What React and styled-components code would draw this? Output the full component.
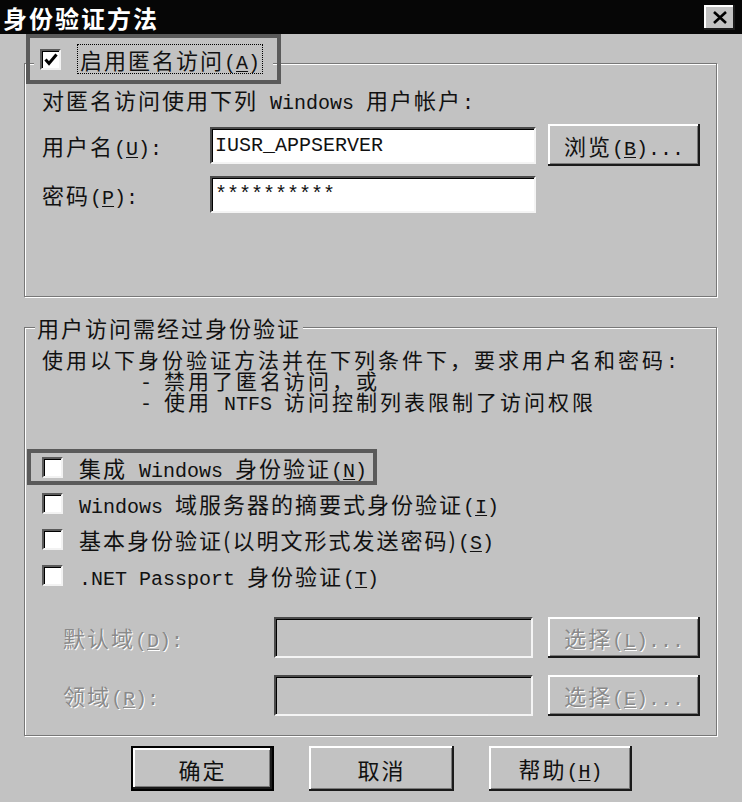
import React from "react"
import styled, { createGlobalStyle } from "styled-components"

const CJK = `"Noto Sans CJK SC", "Liberation Sans", sans-serif`
const MONO = `"Liberation Mono", "DejaVu Sans Mono", monospace`
const FACE = "#c2c2c2"

const GlobalStyle = createGlobalStyle`
  html, body {
    margin: 0;
    padding: 0;
    background: ${FACE};
  }
  * { box-sizing: border-box; }
`

const Dialog = styled.div`
  width: 742px;
  height: 802px;
  background: ${FACE};
  display: flex;
  flex-direction: column;
  font-family: ${CJK};
  font-size: 22px;
  letter-spacing: 2px;
  color: #111;
  overflow: hidden;
`

const TitleBar = styled.div`
  height: 34px;
  flex-shrink: 0;
  background: #060606;
  display: flex;
  align-items: center;
  justify-content: space-between;
  padding: 0 7px 0 3px;
`

const Title = styled.div`
  color: #fff;
  font-weight: 700;
  font-size: 24px;
  letter-spacing: 2px;
`

const CloseButton = styled.button`
  width: 31px;
  height: 25px;
  padding: 0;
  border: 0;
  background: ${FACE};
  display: flex;
  align-items: center;
  justify-content: center;
  box-shadow: inset -2px -2px 0 #1a1a1a, inset 2px 2px 0 #fff;
`

const Body = styled.div`
  padding: 0 25px 0 24px;
  display: flex;
  flex-direction: column;
`

const Group = styled.fieldset`
  margin: ${({ $top }) => $top}px 0 0;
  padding: 0;
  min-width: 0;
  border: 1px solid #777;
  box-shadow: 1px 1px 0 #fff, inset 1px 1px 0 #fff;
`

const Legend = styled.legend`
  margin-left: ${({ $indent }) => $indent}px;
  padding: ${({ $pad }) => $pad};
  background: ${FACE};
  line-height: 28px;
  height: ${({ $h }) => ($h ? `${$h}px` : "auto")};
`

const GroupContent = styled.div`
  padding: ${({ $pad }) => $pad};
  height: ${({ $h }) => ($h ? `${$h}px` : "auto")};
`

const Lat = styled.span`
  font-family: ${MONO};
  font-size: 20px;
  line-height: 1;
  letter-spacing: 0;
  white-space: pre;
`

const U = styled.u`
  text-decoration-thickness: 1px;
  text-underline-offset: 2px;
`

const Key = ({ k, tail = "" }) => (
  <Lat>
    (<U>{k}</U>){tail}
  </Lat>
)

const Line = styled.div`
  height: ${({ $lh }) => $lh || 28}px;
  line-height: ${({ $lh }) => $lh || 28}px;
  padding-left: ${({ $indent }) => $indent || 0}px;
  white-space: nowrap;
`

const Para = styled.div`
  margin-top: ${({ $top }) => $top}px;
  font-size: 21px;
  letter-spacing: 3px;
`

const CheckRow = styled.label`
  display: flex;
  align-items: center;
  gap: 16px;
  width: fit-content;
  height: ${({ $h }) => $h}px;
  margin-left: ${({ $shift }) => -$shift}px;
  padding: 0 10px 0 ${({ $shift }) => $shift}px;
  outline: ${({ $marked }) => ($marked ? "4px solid #5a5a5a" : "none")};
  outline-offset: -4px;
  white-space: nowrap;
  line-height: 28px;
`

const Box = styled.span`
  width: 21px;
  height: 21px;
  flex-shrink: 0;
  background: #fff;
  border: 2px solid;
  border-color: #5a5a5a #f2f2f2 #f2f2f2 #5a5a5a;
  box-shadow: inset 1px 1px 0 #000;
  display: flex;
  align-items: center;
  justify-content: center;
`

const Focus = styled.span`
  display: inline-block;
  height: 30px;
  line-height: 28px;
  border: 1px dotted #000;
  padding: 0 2px;
`

const CheckList = styled.div`
  margin-top: ${({ $top }) => $top}px;
  display: flex;
  flex-direction: column;
`

const FormGrid = styled.div`
  margin-top: ${({ $top }) => $top}px;
  margin-left: ${({ $left }) => $left || 0}px;
  display: grid;
  grid-template-columns: ${({ $cols }) => $cols};
  column-gap: ${({ $gap }) => $gap}px;
  row-gap: ${({ $rowGap }) => $rowGap}px;
  align-items: center;
`

const FieldLabel = styled.span`
  line-height: 28px;
  white-space: nowrap;
  color: ${({ $off }) => ($off ? "#8a8a8a" : "#111")};
  text-shadow: ${({ $off }) => ($off ? "1px 1px 0 #fff" : "none")};
`

const Field = styled.input`
  height: ${({ $h }) => $h}px;
  width: 100%;
  margin: 0;
  padding: 0 3px;
  border: 2px solid;
  border-color: #4a4a4a #f4f4f4 #f4f4f4 #4a4a4a;
  box-shadow: inset 1px 1px 0 #000;
  background: ${({ disabled }) => (disabled ? FACE : "#fff")};
  font-family: ${MONO};
  font-size: 20px;
  color: #111;
  outline: none;
`

const Button = styled.button`
  height: ${({ $h }) => $h}px;
  width: ${({ $w }) => ($w ? `${$w}px` : "100%")};
  margin: 0;
  padding: 0;
  border: ${({ $default }) => ($default ? "2px solid #000" : "0")};
  background: ${FACE};
  font-family: ${CJK};
  font-size: 22px;
  line-height: 28px;
  letter-spacing: 2px;
  text-align: center;
  color: ${({ disabled }) => (disabled ? "#8a8a8a" : "#111")};
  text-shadow: ${({ disabled }) => (disabled ? "1px 1px 0 #fff" : "none")};
  box-shadow: inset -2px -2px 0 #1a1a1a, inset 2px 2px 0 #fff,
    inset -3px -3px 0 #7a7a7a;
`

const Footer = styled.div`
  margin-top: 10px;
  padding-left: 131px;
  display: flex;
  gap: 35px;
`

const CheckMark = () => (
  <svg width="14" height="13" viewBox="0 0 14 13">
    <path d="M1.5 6.5 L5 10.5 L12.5 1.5" fill="none" stroke="#000" strokeWidth="3" />
  </svg>
)

const CloseGlyph = () => (
  <svg width="16" height="13" viewBox="0 0 16 13">
    <path d="M2 1 L14 12 M14 1 L2 12" stroke="#000" strokeWidth="2.6" />
  </svg>
)

const options = [
  { text: <>集成<Lat> Windows </Lat>身份验证<Key k="N" /></>, marked: true },
  { text: <><Lat>Windows </Lat>域服务器的摘要式身份验证<Key k="I" /></> },
  { text: <>基本身份验证(以明文形式发送密码)<Key k="S" /></> },
  { text: <><Lat>.NET Passport </Lat>身份验证<Key k="T" /></> },
]

export default function App() {
  return (
    <Dialog>
      <GlobalStyle />
      <TitleBar>
        <Title>身份验证方法</Title>
        <CloseButton aria-label="关闭">
          <CloseGlyph />
        </CloseButton>
      </TitleBar>

      <Body>
        <Group $top={8}>
          <Legend $indent={9} $pad="0 0 8px" $h={42}>
            <CheckRow $h={34} $shift={0} $marked style={{ paddingLeft: 6, paddingRight: 10, outlineOffset: 4 }}>
              <Box>
                <CheckMark />
              </Box>
              <Focus>
                启用匿名访问<Key k="A" />
              </Focus>
            </CheckRow>
          </Legend>
          <GroupContent $pad="1px 16px 0 17px" $h={212}>
            <Line>
              对匿名访问使用下列<Lat> Windows </Lat>用户帐户<Lat>:</Lat>
            </Line>
            <FormGrid $top={11} $cols="156px 326px 152px" $gap={12} $rowGap={10}>
              <FieldLabel>
                用户名<Key k="U" tail=":" />
              </FieldLabel>
              <Field $h={37} defaultValue="IUSR_APPSERVER" readOnly />
              <Button $h={42}>
                浏览<Key k="B" tail="..." />
              </Button>
              <FieldLabel>
                密码<Key k="P" tail=":" />
              </FieldLabel>
              <Field $h={37} defaultValue="**********" readOnly />
              <span />
            </FormGrid>
          </GroupContent>
        </Group>

        <Group $top={16}>
          <Legend $indent={10} $pad="0 2px" $h={28}>
            用户访问需经过身份验证
          </Legend>
          <GroupContent $pad="8px 16px 19px 17px">
            <Para $top={0}>
              <Line $lh={21}>
                使用以下身份验证方法并在下列条件下，要求用户名和密码<Lat>:</Lat>
              </Line>
              <Line $lh={21} $indent={98}>
                <Lat>- </Lat>禁用了匿名访问，或
              </Line>
              <Line $lh={21} $indent={98}>
                <Lat>- </Lat>使用<Lat> NTFS </Lat>访问控制列表限制了访问权限
              </Line>
            </Para>

            <CheckList $top={37}>
              {options.map((o, i) => (
                <CheckRow key={i} $h={36} $shift={15} $marked={o.marked}>
                  <Box />
                  <span>{o.text}</span>
                </CheckRow>
              ))}
            </CheckList>

            <FormGrid $top={24} $left={21} $cols="196px 259px 152px" $gap={15} $rowGap={17}>
              <FieldLabel $off>
                默认域<Key k="D" tail=":" />
              </FieldLabel>
              <Field $h={41} disabled />
              <Button $h={41} disabled>
                选择<Key k="L" tail="..." />
              </Button>
              <FieldLabel $off>
                领域<Key k="R" tail=":" />
              </FieldLabel>
              <Field $h={41} disabled />
              <Button $h={41} disabled>
                选择<Key k="E" tail="..." />
              </Button>
            </FormGrid>
          </GroupContent>
        </Group>
      </Body>

      <Footer>
        <Button $h={45} $w={143} $default>
          确定
        </Button>
        <Button $h={45} $w={145}>
          取消
        </Button>
        <Button $h={45} $w={143}>
          帮助<Key k="H" />
        </Button>
      </Footer>
    </Dialog>
  )
}
